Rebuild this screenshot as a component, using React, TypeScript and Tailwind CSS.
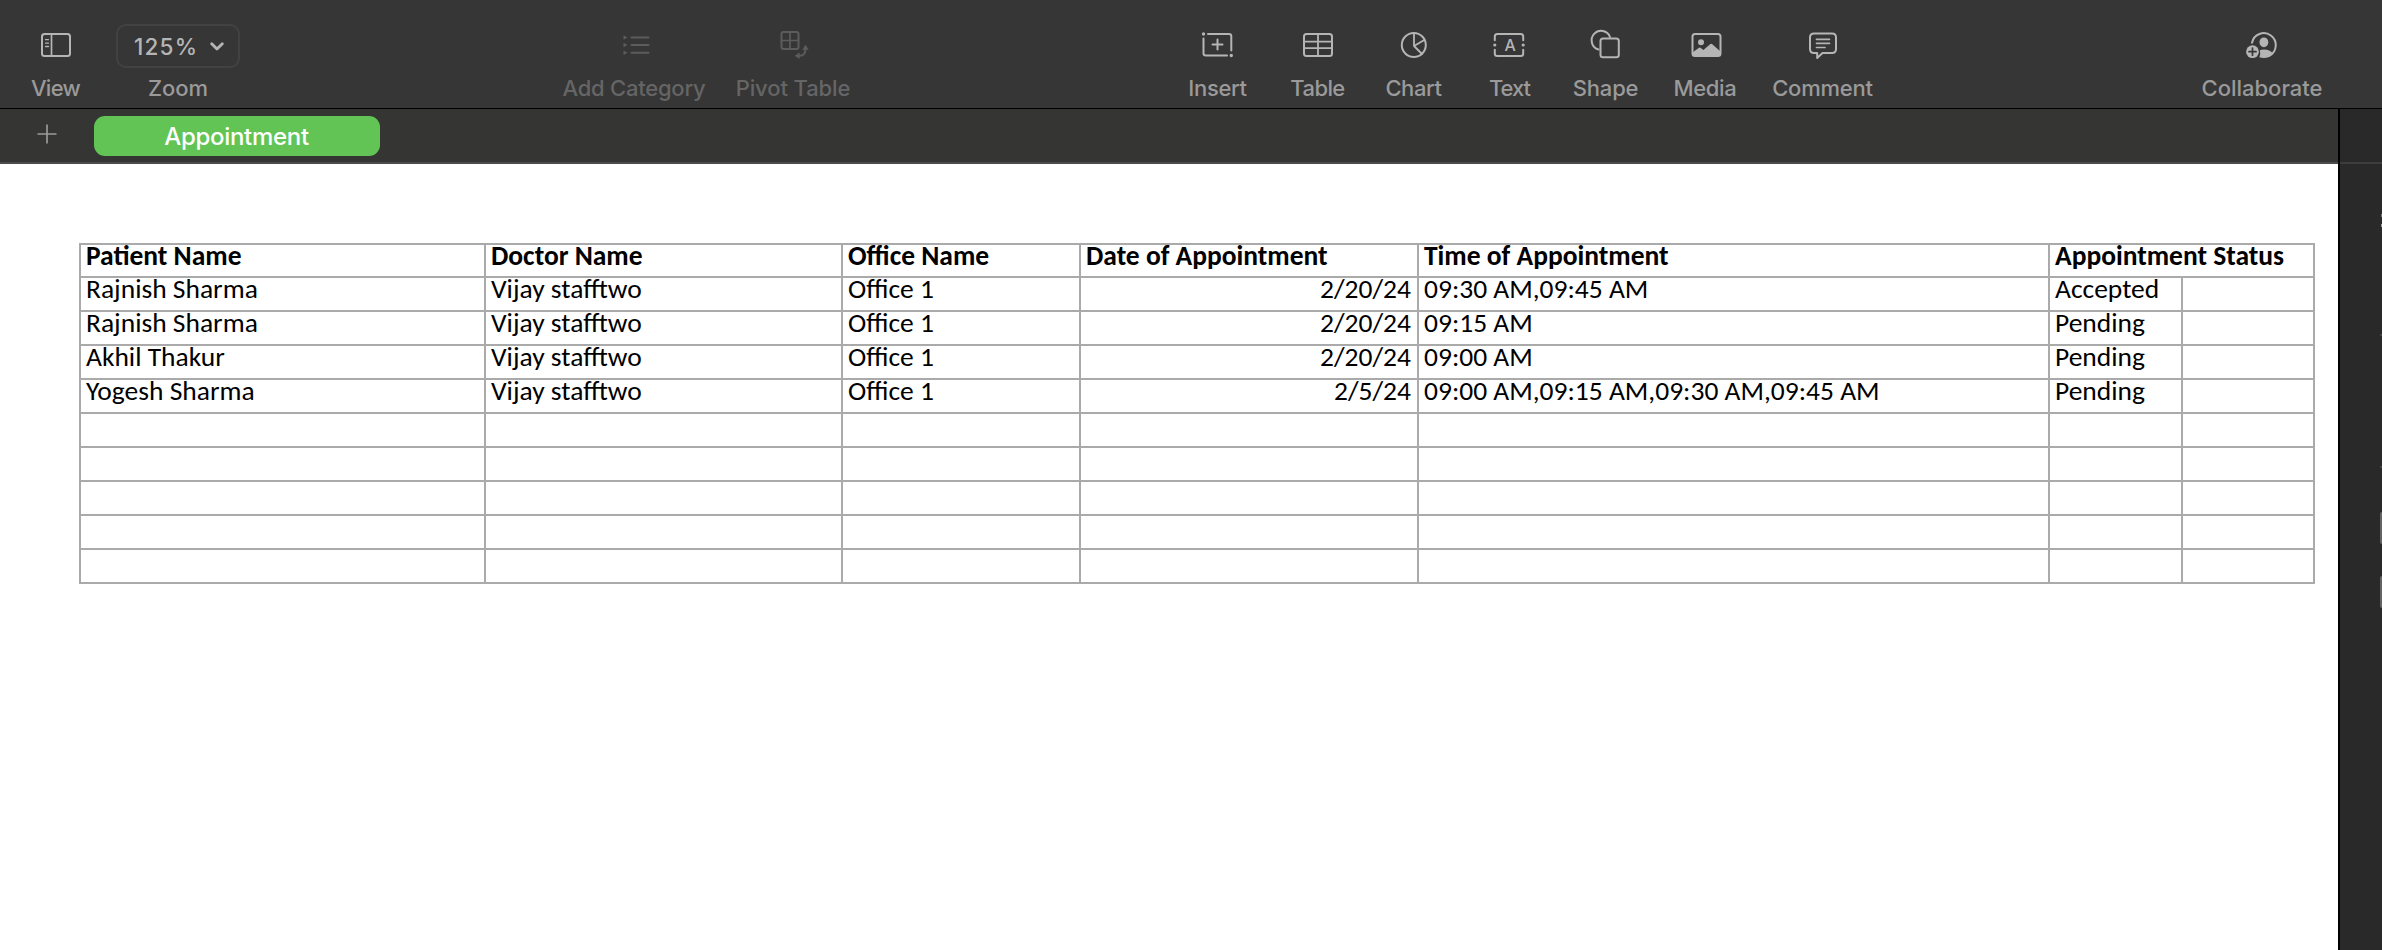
import type { ReactNode } from "react";

function Icon({ children }: { children: ReactNode }) {
  return (
    <svg
      viewBox="0 0 40 40"
      className="h-10 w-10 shrink-0"
      fill="none"
      stroke="currentColor"
      strokeWidth="2"
      strokeLinecap="round"
      strokeLinejoin="round"
    >
      {children}
    </svg>
  );
}

const ViewIcon = (
  <Icon>
    <rect x="6" y="9" width="28" height="22" rx="2.5" />
    <path d="M15.5 9v22" strokeWidth="1.7" />
    <path d="M9.5 14.7h3M9.5 18.1h3M9.5 21.5h3" strokeWidth="1.3" />
  </Icon>
);

const CategoryIcon = (
  <Icon>
    <path d="M16.5 12.5h17M16.5 20h17M16.5 27.7h17" />
    <path
      d="M8.5 10.3l4 2.2-4 2.2zM8.5 17.8l4 2.2-4 2.2zM8.5 25.5l4 2.2-4 2.2z"
      fill="currentColor"
      stroke="none"
    />
  </Icon>
);

const PivotIcon = (
  <Icon>
    <rect x="7.5" y="7" width="17" height="17" rx="2" />
    <path d="M16 7v17M7.5 15.5h17" strokeWidth="1.7" />
    <path d="M31.5 24.5q-.3 6-6 6.3" />
    <path d="M31.5 19.8l3.2 5h-6.4zM20.6 30.7l5-3.3v6.6z" fill="currentColor" stroke="none" />
  </Icon>
);

const InsertIcon = (
  <Icon>
    <path d="M10 9h21q2.3 0 2.3 2.3v14.2M5.5 13.5v14.7q0 2.3 2.3 2.3h21.2" />
    <path d="M19.5 14.5v10M14.5 19.5h10" />
    <circle cx="5.5" cy="9" r="1.7" fill="currentColor" stroke="none" />
    <circle cx="33.3" cy="30.5" r="1.7" fill="currentColor" stroke="none" />
  </Icon>
);

const TableIcon = (
  <Icon>
    <rect x="6" y="9" width="28" height="22" rx="2.5" />
    <path d="M20 9v22M6 16.7h28M6 23.2h28" strokeWidth="1.8" />
  </Icon>
);

const ChartIcon = (
  <Icon>
    <circle cx="19.8" cy="20" r="12" />
    <path d="M20 8v13l10.3-6M20 21l8 8" strokeWidth="1.8" />
  </Icon>
);

const TextIcon = (
  <Icon>
    <path d="M4.800 15.300v-3.800q0-2.500 2.500-2.500h23.400q2.500 0 2.500 2.500v3.800M4.800 24.700v3.800q0 2.500 2.500 2.500h23.400q2.500 0 2.500-2.500v-3.800" />
    <circle cx="4.800" cy="20" r="1.600" fill="currentColor" stroke="none" />
    <circle cx="33.200" cy="20" r="1.600" fill="currentColor" stroke="none" />
    <text
      x="19.600"
      y="25.700"
      textAnchor="middle"
      fill="currentColor"
      stroke="none"
      className="font-[Inter] text-[16px] font-medium"
    >
      A
    </text>
  </Icon>
);

const ShapeIcon = (
  <Icon>
    <rect x="14.500" y="13.500" width="18.300" height="18.800" rx="2.500" />
    <path d="M12.500 24.500A9.500 9.500 0 1 1 24 12" />
  </Icon>
);

const MediaIcon = (
  <Icon>
    <rect x="6.500" y="9" width="28" height="22" rx="2.500" />
    <path
      d="M6.500 27.500l6.500-4.800q.7-.5 1.400 0l3 2.400 7-6q.8-.7 1.600 0l8.500 7.400v2.500q0 2-2.500 2h-23q-2.500 0-2.500-2z"
      fill="currentColor"
      stroke="none"
    />
    <circle cx="15" cy="17.300" r="3" fill="currentColor" stroke="none" />
  </Icon>
);

const CommentIcon = (
  <Icon>
    <path d="M11 8.500h18q4 0 4 4v11.500q0 4-4 4h-9.500l-5.300 5v-5h-3.200q-4 0-4-4v-11.500q0-4 4-4z" />
    <path d="M13.500 14.300h13M13.500 18.300h13M13.500 22.500h8.500" strokeWidth="1.700" />
  </Icon>
);

const CollaborateIcon = (
  <Icon>
    <path d="M9 17.800A12 12 0 1 1 26.500 30.700" />
    <ellipse cx="20.900" cy="17.300" rx="4.400" ry="4.900" fill="currentColor" stroke="none" />
    <path
      d="M16.800 25.300q2-.8 4.100-.8 6 0 9 4-3.500 4.600-9 4.600-2.500 0-4.500-.8 1.500-3.500.4-7z"
      fill="currentColor"
      stroke="none"
    />
    <circle cx="9.500" cy="26.700" r="6.400" fill="currentColor" stroke="none" />
    <path d="M9.500 23.200v7M6 26.700h7" stroke="#363636" strokeWidth="1.700" />
  </Icon>
);

function Tool({
  label,
  icon,
  className,
  dim = false,
}: {
  label: string;
  icon: ReactNode;
  className: string;
  dim?: boolean;
}) {
  return (
    <button
      className={`flex shrink-0 flex-col items-center pt-[25px] ${dim ? "text-[#5c5c5c]" : "text-[#b5b5b5]"} ${className}`}
    >
      {icon}
      <span
        className={`mt-[9px] pr-px text-[22px] leading-7 font-medium whitespace-nowrap ${dim ? "text-[#656565]" : "text-[#9a9a9a]"}`}
      >
        {label}
      </span>
    </button>
  );
}

function Toolbar() {
  return (
    <header className="flex h-[109px] shrink-0 items-start border-b border-black bg-[#363636]">
      <Tool label="View" icon={ViewIcon} className="ml-[26px] w-[60px] tracking-[-0.7px]" />
      <div className="ml-[30px] flex w-[124px] shrink-0 flex-col items-center pt-6">
        <button className="flex h-11 w-full items-center rounded-[10px] border-2 border-[#424242] pl-4 text-[#b5b5b5]">
          <span className="w-[76px] pt-px text-left text-[22.5px] font-medium tracking-[1.2px]">125%</span>
          <svg
            viewBox="0 0 14 9"
            className="h-[9px] w-[14px]"
            fill="none"
            stroke="currentColor"
            strokeWidth="2.8"
            strokeLinecap="round"
            strokeLinejoin="round"
          >
            <path d="M1.7 1.7L7 7l5.3-5.3" />
          </svg>
        </button>
        <span className="mt-[6px] text-[22px] leading-7 font-medium text-[#9a9a9a]">Zoom</span>
      </div>
      <Tool
        label="Add Category"
        icon={CategoryIcon}
        dim
        className="ml-[315px] w-[159px] tracking-[-0.24px]"
      />
      <Tool label="Pivot Table" icon={PivotIcon} dim className="w-[159px] tracking-[-0.1px]" />
      <Tool label="Insert" icon={InsertIcon} className="ml-[305px] w-[80px] tracking-[-0.35px]" />
      <Tool label="Table" icon={TableIcon} className="ml-[20px] w-[80px] tracking-[-0.6px]" />
      <Tool label="Chart" icon={ChartIcon} className="ml-[16px] w-[80px] tracking-[-0.4px]" />
      <Tool label="Text" icon={TextIcon} className="ml-[16px] w-[80px] tracking-[-1.1px]" />
      <Tool label="Shape" icon={ShapeIcon} className="ml-[16px] w-[80px] tracking-[-0.15px]" />
      <Tool label="Media" icon={MediaIcon} className="ml-[19px] w-[81px] tracking-[-0.3px]" />
      <Tool label="Comment" icon={CommentIcon} className="ml-[17px] w-[120px] tracking-[-0.2px]" />
      <Tool label="Collaborate" icon={CollaborateIcon} className="ml-[309px] w-[141px]" />
    </header>
  );
}

function SheetTabs() {
  return (
    <nav className="flex h-[55px] shrink-0 items-start border-b-2 border-[#4b4b4b] bg-[#353533] pt-[7px]">
      <button className="ml-9 flex h-9 w-[21px] items-center justify-center">
        <svg viewBox="0 0 20 20" className="h-5 w-5 shrink-0" stroke="#9a9a9a" strokeWidth="1.7">
          <path d="M10 .5v19M.5 10h19" />
        </svg>
      </button>
      <button className="ml-[37px] h-10 w-[286px] rounded-[11px] bg-[#61c455] pr-px text-[24px] leading-[41px] font-medium tracking-[-0.3px] text-white">
        Appointment
      </button>
    </nav>
  );
}

type Row = [string, string, string, string, string, string];

const headers = [
  "Patient Name",
  "Doctor Name",
  "Office Name",
  "Date of Appointment",
  "Time of Appointment",
  "Appointment Status",
];

const rows: Row[] = [
  ["Rajnish Sharma", "Vijay stafftwo", "Office 1", "2/20/24", "09:30 AM,09:45 AM", "Accepted"],
  ["Rajnish Sharma", "Vijay stafftwo", "Office 1", "2/20/24", "09:15 AM", "Pending"],
  ["Akhil Thakur", "Vijay stafftwo", "Office 1", "2/20/24", "09:00 AM", "Pending"],
  [
    "Yogesh Sharma",
    "Vijay stafftwo",
    "Office 1",
    "2/5/24",
    "09:00 AM,09:15 AM,09:30 AM,09:45 AM",
    "Pending",
  ],
  ["", "", "", "", "", ""],
  ["", "", "", "", "", ""],
  ["", "", "", "", "", ""],
  ["", "", "", "", "", ""],
  ["", "", "", "", "", ""],
];

const columns =
  "grid grid-cols-[405px_357px_238px_338px_631px_133px_132px] border-b-2 border-[#aaaaaa]";
const cell = "border-r-2 border-[#aaaaaa] pl-[5px] pr-[6px] whitespace-nowrap leading-[21px]";

function AppointmentTable() {
  return (
    <div className="w-[2236px] border-t-2 border-l-2 border-[#aaaaaa] font-[Carlito,Calibri,Lato,sans-serif] text-[27.5px] text-black">
      <div className={`${columns} h-[33px] font-bold`}>
        {headers.map((title, i) => (
          <div key={title} className={`${cell} ${i === 5 ? "col-span-2" : ""}`}>
            {title}
          </div>
        ))}
      </div>
      {rows.map((row, r) => (
        <div key={r} className={`${columns} h-[34px]`}>
          {row.map((value, c) => (
            <div key={c} className={`${cell} ${c === 3 ? "text-right" : ""}`}>
              {value}
            </div>
          ))}
          <div className={cell} />
        </div>
      ))}
    </div>
  );
}

function Inspector() {
  return (
    <aside className="flex w-[44px] shrink-0 flex-col items-end border-l-2 border-black bg-[#292929]">
      <div className="h-[55px] w-full border-b-2 border-[#3d3d3d]" />
      <div className="mt-[50px] h-[3px] w-px bg-[#777777]" />
      <div className="mt-[7px] h-[3px] w-px bg-[#a0a0a0]" />
      <div className="mt-[107px] h-[2px] w-[2px] bg-[#444444]" />
      <div className="mt-[130px] h-[2px] w-[2px] bg-[#444444]" />
      <div className="mt-[44px] h-8 w-[2px] rounded-l-full bg-[#646464]" />
      <div className="mt-8 h-8 w-[2px] rounded-l-full bg-[#646464]" />
    </aside>
  );
}

export default function App() {
  return (
    <div className="flex h-[950px] w-[2382px] flex-col overflow-hidden bg-white font-[Inter,sans-serif]">
      <Toolbar />
      <div className="flex min-h-0 flex-1">
        <main className="flex w-[2338px] shrink-0 flex-col bg-white">
          <SheetTabs />
          <section className="pt-[79px] pl-[79px]">
            <AppointmentTable />
          </section>
        </main>
        <Inspector />
      </div>
    </div>
  );
}
